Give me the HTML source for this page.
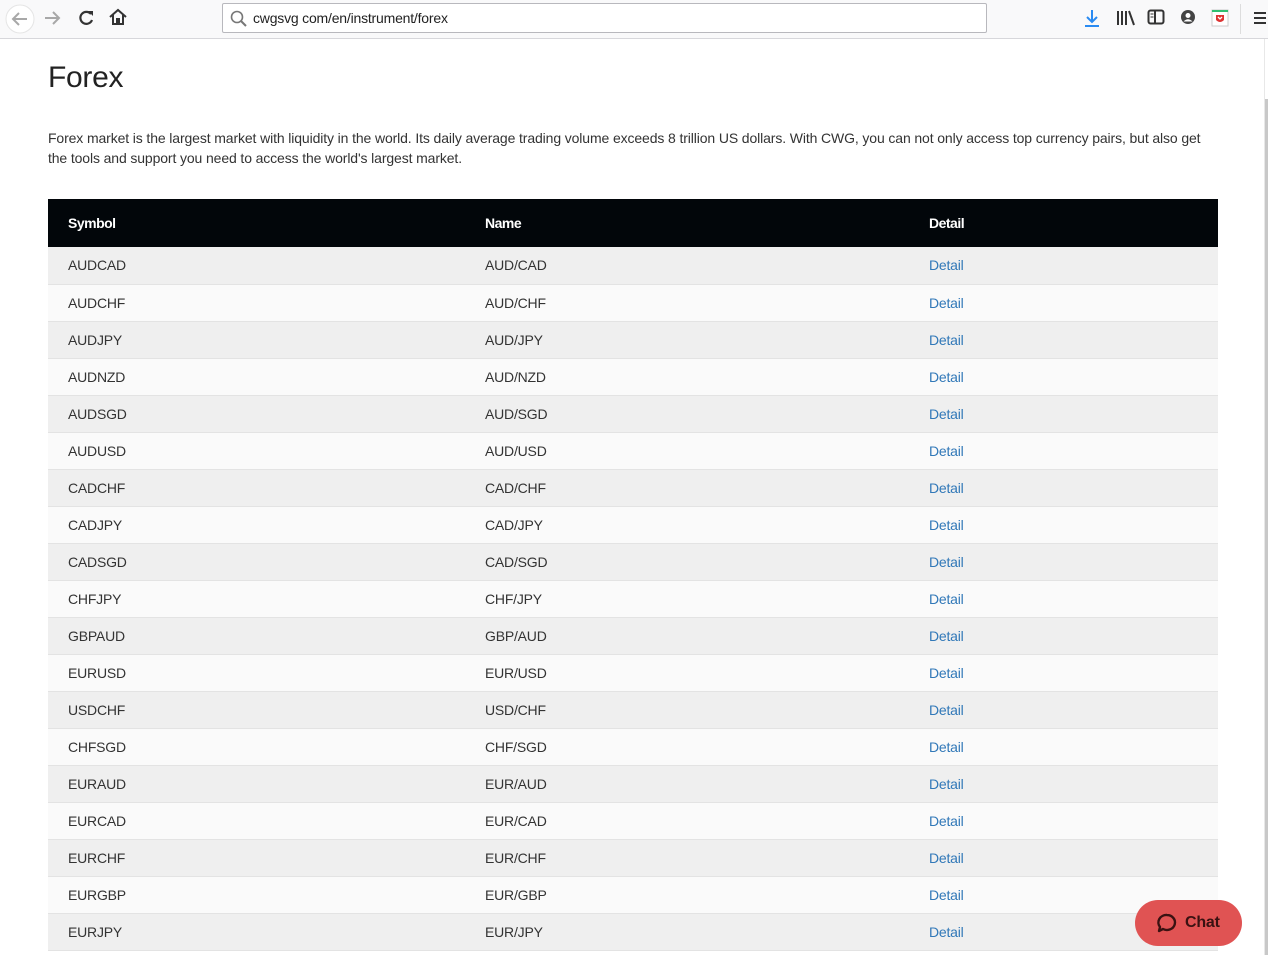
<!DOCTYPE html>
<html><head><meta charset="utf-8"><style>
*{margin:0;padding:0;box-sizing:border-box}
body{width:1268px;height:955px;overflow:hidden;background:#fff;font-family:"Liberation Sans",Arial,sans-serif;position:relative}
.tb{position:absolute;left:0;top:0;width:1268px;height:39px;background:#f9f9fa;border-bottom:1px solid #d7d7db}
.url{position:absolute;left:222px;top:3px;width:765px;height:30px;background:#fff;border:1px solid #b8b8bd;border-radius:2px;font-size:14px;color:#222;line-height:28px;padding-left:30px;letter-spacing:-0.2px}
.ic{position:absolute}
.sb{position:absolute;right:0;top:39px;width:4px;height:916px;background:#fff;border-left:1px solid #e8e8e8}
.sb div{position:absolute;left:0;top:60px;width:4px;height:856px;background:#c8c8c8}
h1{position:absolute;left:48px;top:61px;font-size:30px;font-weight:normal;color:#222;letter-spacing:-0.3px}
p.d{position:absolute;left:48px;top:128px;width:1175px;font-size:14px;line-height:20px;color:#333;letter-spacing:-0.12px}
table{position:absolute;left:48px;top:199px;width:1170px;border-collapse:collapse;font-size:14px;color:#333;letter-spacing:-0.2px}
th{background:#02060a;color:#fff;text-align:left;height:48px;font-weight:bold;font-size:14px;letter-spacing:-0.5px}
td{height:37px;border-bottom:1px solid #e3e3e3}
th:first-child,td:first-child{padding-left:20px;width:437px}
th:nth-child(2),td:nth-child(2){width:444px}
tbody tr:nth-child(odd) td{background:#efefef}
tbody tr:nth-child(even) td{background:#fafafa}
td a{color:#3178b8;text-decoration:none}
.chat{position:absolute;left:1135px;top:900px;width:107px;height:46px;border-radius:23px;background:#e05353;color:#3a1212;font-weight:bold;font-size:16px;line-height:46px;padding-left:50px;letter-spacing:-0.2px}
</style></head><body>
<div class="tb">
<svg class="ic" style="left:4px;top:4px" width="32" height="30"><circle cx="16" cy="15" r="14" fill="#fff" stroke="#e5e5e5"/><path d="M23 15H10M15 9l-6 6 6 6" stroke="#a8a8a8" stroke-width="2" fill="none"/></svg>
<svg class="ic" style="left:42px;top:8px" width="20" height="20"><path d="M3 10h13M11 4l6 6-6 6" stroke="#a8a8a8" stroke-width="2" fill="none"/></svg>
<svg class="ic" style="left:76px;top:8px" width="20" height="20"><path d="M15 6A6 6 0 1 0 16 12" stroke="#333" stroke-width="2.2" fill="none"/><path d="M12 3h5v5z" fill="#333"/></svg>
<svg class="ic" style="left:108px;top:7px" width="20" height="20"><path d="M2 10L10 3l8 7M5 8v9h4v-5h2v5h4V8" stroke="#333" stroke-width="2" fill="none"/></svg>
<div class="url"><svg style="position:absolute;left:7px;top:6px" width="18" height="18"><circle cx="7" cy="7" r="5.5" stroke="#777" stroke-width="1.6" fill="none"/><path d="M11 11l5 5" stroke="#777" stroke-width="2"/></svg>cwgsvg com/en/instrument/forex</div>
<svg class="ic" style="left:1083px;top:8px" width="18" height="20"><path d="M9 2v12M4 9l5 5 5-5M2 18h14" stroke="#2a8bf2" stroke-width="2" fill="none"/></svg>
<svg class="ic" style="left:1115px;top:9px" width="20" height="18"><path d="M3 2v14M7 2v14M11 2v14M14 2l5 14" stroke="#333" stroke-width="2"/></svg>
<svg class="ic" style="left:1147px;top:9px" width="18" height="16"><rect x="1.5" y="1.5" width="15" height="13" rx="2" stroke="#333" stroke-width="2" fill="none"/><path d="M8 2v12" stroke="#333" stroke-width="2"/><path d="M3.5 5h3M3.5 8h3" stroke="#333"/></svg>
<svg class="ic" style="left:1180px;top:9px" width="16" height="16"><circle cx="8" cy="8" r="7" fill="#444"/><circle cx="8" cy="6.5" r="2.5" fill="#fff"/><path d="M3.5 12.5Q8 8 12.5 12.5" fill="#fff"/></svg>
<svg class="ic" style="left:1211px;top:9px" width="18" height="18"><rect x="1" y="1" width="16" height="16" fill="#fff" stroke="#ccc"/><rect x="1" y="1" width="16" height="2" fill="#2fbf71"/><path d="M5 6v5q4 4 8 0V6z" fill="#d33"/><path d="M7 8l2 2 2-2" stroke="#fff" stroke-width="1.3" fill="none"/></svg>
<div style="position:absolute;left:1240px;top:4px;width:1px;height:30px;background:#ddd"></div>
<svg class="ic" style="left:1253px;top:11px" width="14" height="14"><path d="M1 2h12M1 7h12M1 12h12" stroke="#333" stroke-width="2"/></svg>
</div>
<div class="sb"><div></div></div>
<h1>Forex</h1>
<p class="d">Forex market is the largest market with liquidity in the world. Its daily average trading volume exceeds 8 trillion US dollars. With CWG, you can not only access top currency pairs, but also get the tools and support you need to access the world's largest market.</p>
<table>
<thead><tr><th>Symbol</th><th>Name</th><th>Detail</th></tr></thead>
<tbody>
<tr><td>AUDCAD</td><td>AUD/CAD</td><td><a>Detail</a></td></tr>
<tr><td>AUDCHF</td><td>AUD/CHF</td><td><a>Detail</a></td></tr>
<tr><td>AUDJPY</td><td>AUD/JPY</td><td><a>Detail</a></td></tr>
<tr><td>AUDNZD</td><td>AUD/NZD</td><td><a>Detail</a></td></tr>
<tr><td>AUDSGD</td><td>AUD/SGD</td><td><a>Detail</a></td></tr>
<tr><td>AUDUSD</td><td>AUD/USD</td><td><a>Detail</a></td></tr>
<tr><td>CADCHF</td><td>CAD/CHF</td><td><a>Detail</a></td></tr>
<tr><td>CADJPY</td><td>CAD/JPY</td><td><a>Detail</a></td></tr>
<tr><td>CADSGD</td><td>CAD/SGD</td><td><a>Detail</a></td></tr>
<tr><td>CHFJPY</td><td>CHF/JPY</td><td><a>Detail</a></td></tr>
<tr><td>GBPAUD</td><td>GBP/AUD</td><td><a>Detail</a></td></tr>
<tr><td>EURUSD</td><td>EUR/USD</td><td><a>Detail</a></td></tr>
<tr><td>USDCHF</td><td>USD/CHF</td><td><a>Detail</a></td></tr>
<tr><td>CHFSGD</td><td>CHF/SGD</td><td><a>Detail</a></td></tr>
<tr><td>EURAUD</td><td>EUR/AUD</td><td><a>Detail</a></td></tr>
<tr><td>EURCAD</td><td>EUR/CAD</td><td><a>Detail</a></td></tr>
<tr><td>EURCHF</td><td>EUR/CHF</td><td><a>Detail</a></td></tr>
<tr><td>EURGBP</td><td>EUR/GBP</td><td><a>Detail</a></td></tr>
<tr><td>EURJPY</td><td>EUR/JPY</td><td><a>Detail</a></td></tr>
</tbody>
</table>
<div class="chat"><svg style="position:absolute;left:21px;top:12px" width="22" height="22"><path d="M11 3a8 7.5 0 1 1-4 14l-4 2 1-4A8 7.5 0 0 1 11 3z" stroke="#3a1212" stroke-width="2.4" fill="none" stroke-linejoin="round"/></svg>Chat</div>
</body></html>
